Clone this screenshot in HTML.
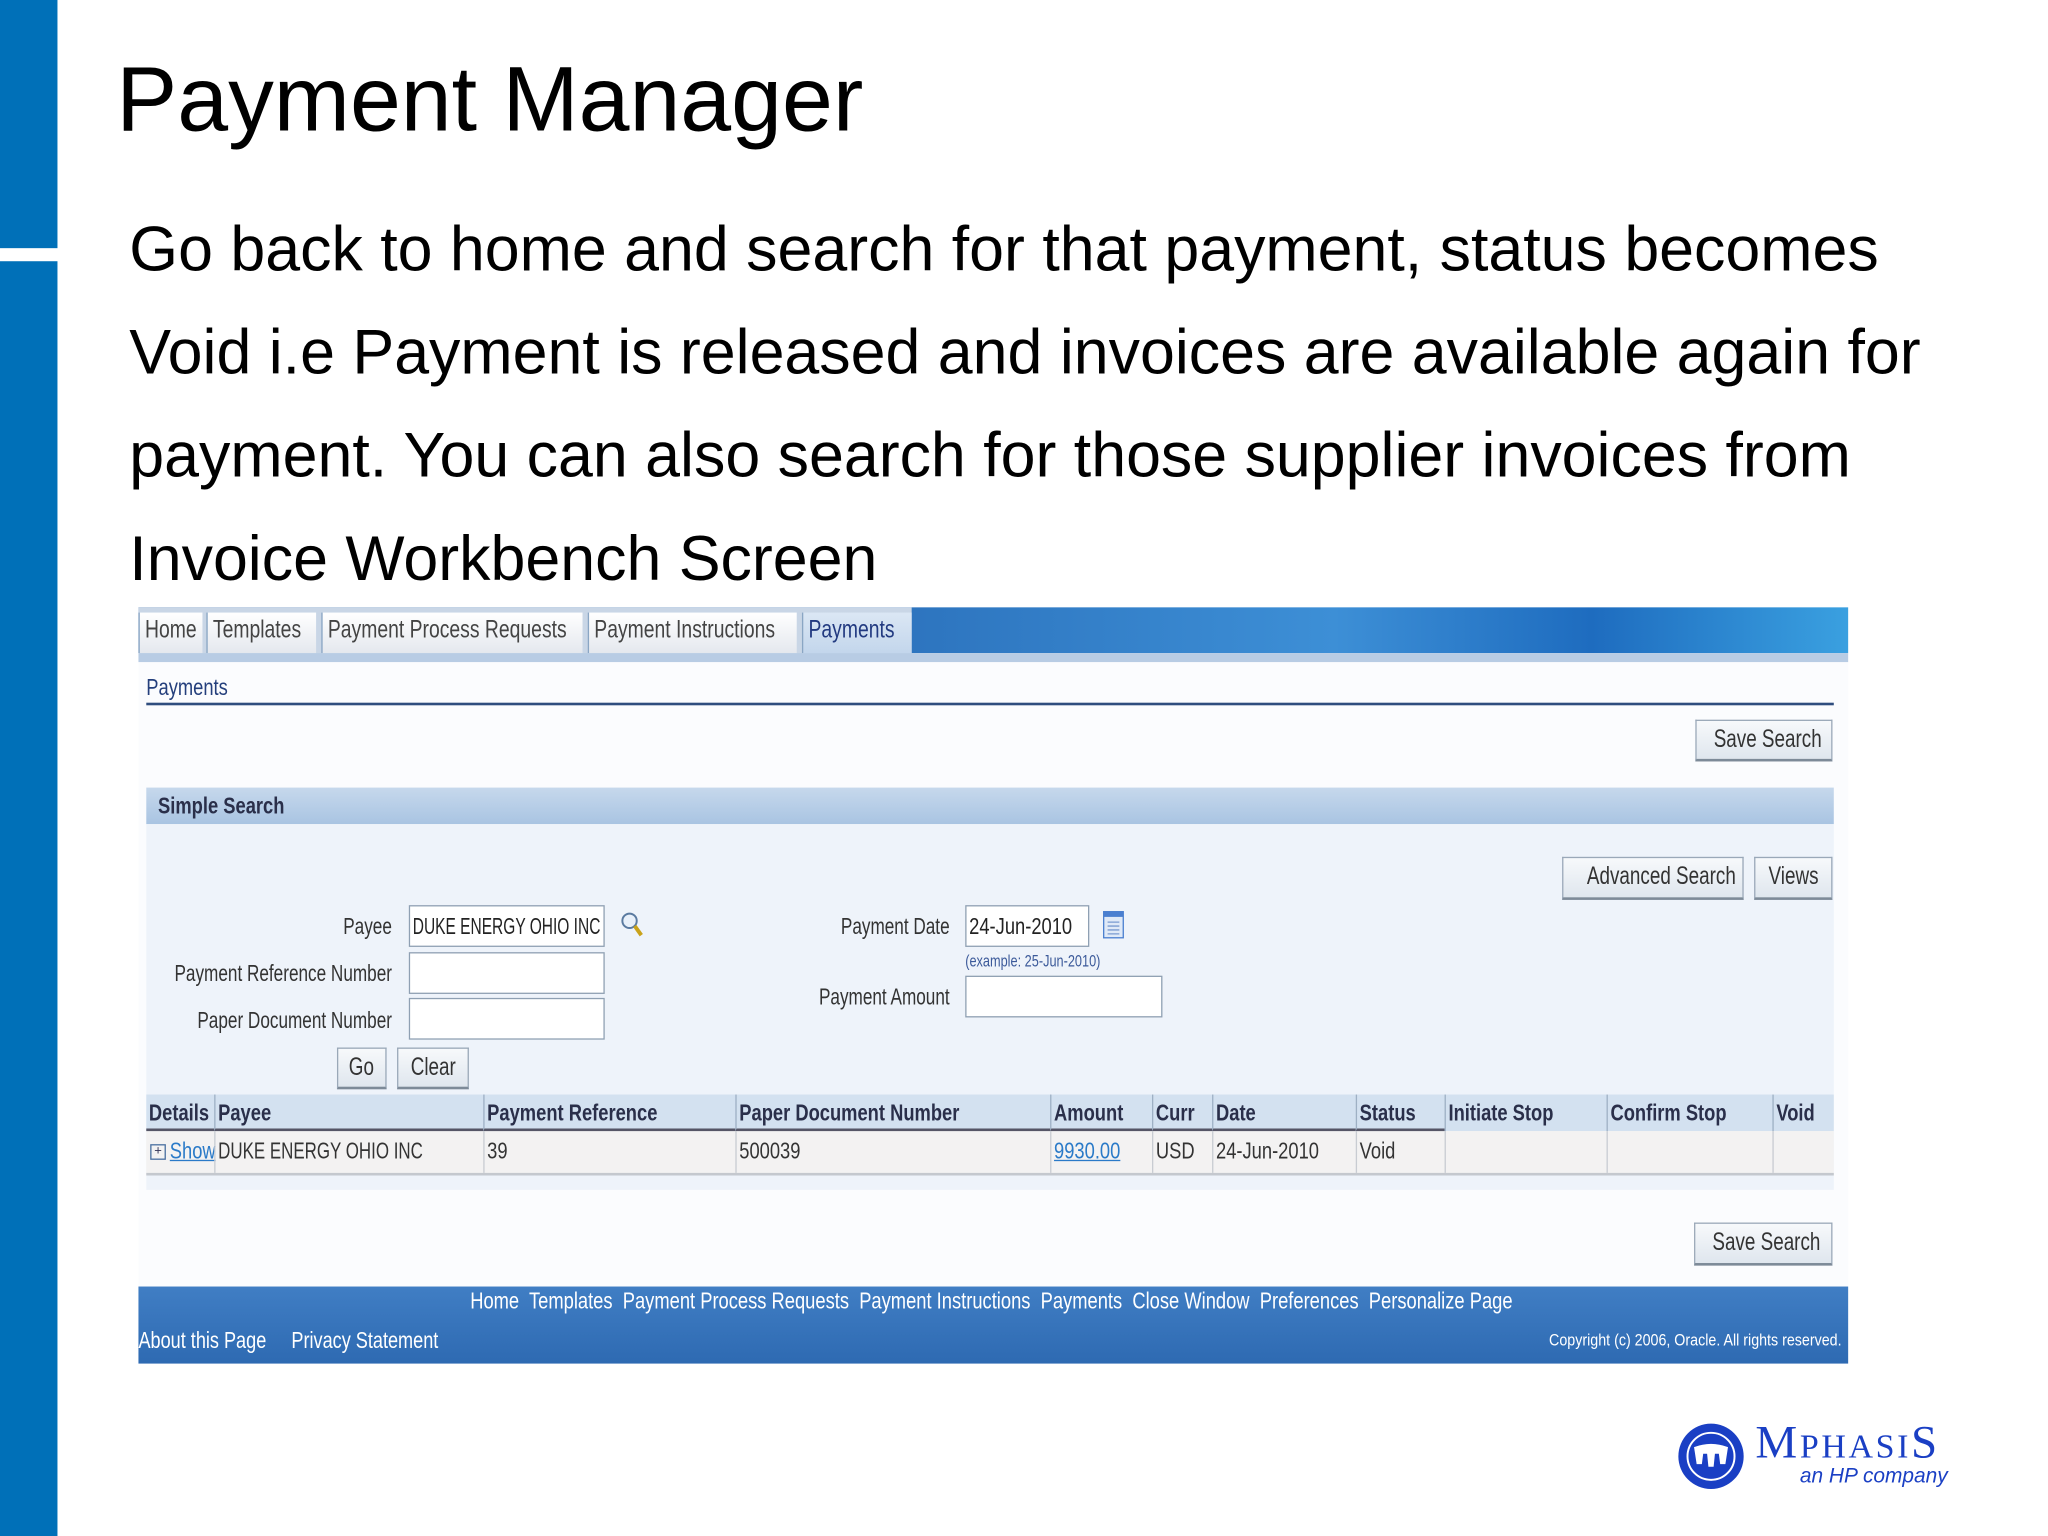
<!DOCTYPE html>
<html><head><meta charset="utf-8"><style>
html,body{margin:0;padding:0;background:#fff;}
body{width:2048px;height:1536px;overflow:hidden;position:relative;}
#s{position:absolute;left:0;top:0;width:1568px;height:1176px;transform:scale(1.30612);transform-origin:0 0;font-family:"Liberation Sans",sans-serif;}
.a{position:absolute;white-space:nowrap;}
.c{display:inline-block;transform:scaleX(.78);transform-origin:0 50%;white-space:nowrap;}
.cr{display:inline-block;transform:scaleX(.73);transform-origin:100% 50%;white-space:nowrap;}
.cc{display:inline-block;transform:scaleX(.76);transform-origin:50% 50%;white-space:nowrap;}
.u{font-size:18px;color:#333;}
.btn{position:absolute;border:1px solid #9aa8b8;border-bottom:2px solid #7d8a98;background:linear-gradient(#f7f9fb,#dfe6ee);font-size:19px;color:#333;text-align:center;box-sizing:border-box;white-space:nowrap;}
.inp{position:absolute;background:#fff;border:1px solid #8fa0b3;box-sizing:border-box;font-size:18px;color:#222;padding:5px 2px;white-space:nowrap;overflow:hidden;}
.lbl{position:absolute;text-align:right;font-size:18px;color:#333;white-space:nowrap;}
.tab{position:absolute;top:469px;height:31px;background:linear-gradient(#fff,#e4e8ee);border-left:1px solid #8aa6c4;box-sizing:border-box;font-size:19px;color:#444;padding:3px 4px;white-space:nowrap;}
.th{position:absolute;top:838px;height:28px;font-weight:bold;font-size:18px;color:#2a2f4a;padding:4px 2px;box-sizing:border-box;border-left:1px solid #9eb0c4;border-bottom:2px solid #556;white-space:nowrap;}
.td{position:absolute;top:866px;height:32px;font-size:18px;color:#333;padding:5px 2px;box-sizing:border-box;border-left:1px solid #c8ccd2;white-space:nowrap;}
.fl{position:absolute;font-size:19px;color:#fff;white-space:nowrap;}
</style></head><body><div id="s">
<div class="a" style="left:0;top:0;width:44px;height:190px;background:#0070b8;"></div>
<div class="a" style="left:0;top:200px;width:44px;height:976px;background:#0070b8;"></div>
<div class="a" style="left:89px;top:36px;font-size:70px;color:#000;">Payment Manager</div>
<div class="a" style="left:99px;top:164px;font-size:48px;color:#000;">Go back to home and search for that payment, status becomes</div>
<div class="a" style="left:99px;top:243px;font-size:48px;color:#000;">Void i.e Payment is released and invoices are available again for</div>
<div class="a" style="left:99px;top:322px;font-size:48px;color:#000;">payment. You can also search for those supplier invoices from</div>
<div class="a" style="left:99px;top:401px;font-size:48px;color:#000;">Invoice Workbench Screen</div>

<div class="a" style="left:106px;top:465px;width:1309px;height:35px;background:linear-gradient(90deg,#1f5fa8 0%,#2a6fba 40%,#3d8fd6 70%,#1e6cbf 85%,#3aa0e0 100%);"></div>
<div class="a" style="left:106px;top:465px;width:592px;height:35px;background:#c9d6e6;"></div>
<div class="a" style="left:106px;top:500px;width:1309px;height:7px;background:#b8cce4;"></div>
<div class="tab" style="left:106px;width:49px;"><span class="c">Home</span></div>
<div class="tab" style="left:158px;width:84px;"><span class="c">Templates</span></div>
<div class="tab" style="left:246px;width:200px;"><span class="c">Payment Process Requests</span></div>
<div class="tab" style="left:450px;width:160px;"><span class="c">Payment Instructions</span></div>
<div class="tab" style="left:614px;width:84px;background:linear-gradient(#dbe7f4,#c3d6ec);color:#223a80;"><span class="c">Payments</span></div>
<div class="a" style="left:106px;top:507px;width:1309px;height:478px;background:#fbfcfe;"></div>
<div class="a u" style="left:112px;top:516px;color:#243f7c;"><span class="c">Payments</span></div>
<div class="a" style="left:112px;top:538px;width:1292px;height:2px;background:#2f4d7e;"></div>
<div class="btn" style="left:1298px;top:551px;width:105px;height:32px;padding-top:4px;"><span class="cc">Save Search</span></div>
<div class="a" style="left:112px;top:603px;width:1292px;height:28px;background:linear-gradient(#c6d8ec,#a9c4e2);"></div>
<div class="a u" style="left:121px;top:607px;font-weight:bold;color:#2a2f4a;"><span class="c">Simple Search</span></div>
<div class="a" style="left:112px;top:631px;width:1292px;height:280px;background:#eef3fa;"></div>
<div class="btn" style="left:1196px;top:656px;width:139px;height:33px;padding-top:4px;"><span class="cc">Advanced Search</span></div>
<div class="btn" style="left:1343px;top:656px;width:60px;height:33px;padding-top:4px;"><span class="cc">Views</span></div>
<div class="lbl" style="right:1268px;top:699px;"><span class="cr">Payee</span></div>
<div class="lbl" style="right:1268px;top:735px;"><span class="cr">Payment Reference Number</span></div>
<div class="lbl" style="right:1268px;top:771px;"><span class="cr">Paper Document Number</span></div>
<div class="inp" style="left:313px;top:693px;width:150px;height:32px;"><span class="c" style="transform:scaleX(.66)">DUKE ENERGY OHIO INC</span></div>
<div class="inp" style="left:313px;top:729px;width:150px;height:32px;"></div>
<div class="inp" style="left:313px;top:764px;width:150px;height:32px;"></div>
<svg class="a" style="left:474px;top:697px;" width="20" height="22"><circle cx="8" cy="8" r="5.5" fill="#e8f0fa" stroke="#5a7aa0" stroke-width="1.5"/><path d="M12 12 L17 19" stroke="#c9a21a" stroke-width="3"/></svg>
<div class="lbl" style="right:841px;top:699px;"><span class="cr">Payment Date</span></div>
<div class="inp" style="left:739px;top:693px;width:95px;height:32px;"><span class="c">24-Jun-2010</span></div>
<svg class="a" style="left:844px;top:697px;" width="17" height="22"><rect x="1" y="1" width="15" height="20" fill="#dfe9f7" stroke="#4a7fd0"/><rect x="1" y="1" width="15" height="4" fill="#4a7fd0"/><path d="M4 9h9M4 12h9M4 15h9M4 18h9" stroke="#7a9ad0"/></svg>
<div class="a" style="left:739px;top:728px;font-size:13px;color:#3c5a9a;"><span class="c" style="transform:scaleX(.75)">(example: 25-Jun-2010)</span></div>
<div class="lbl" style="right:841px;top:753px;"><span class="cr">Payment Amount</span></div>
<div class="inp" style="left:739px;top:747px;width:151px;height:32px;"></div>
<div class="btn" style="left:258px;top:802px;width:38px;height:32px;padding-top:4px;"><span class="cc">Go</span></div>
<div class="btn" style="left:304px;top:802px;width:55px;height:32px;padding-top:4px;"><span class="cc">Clear</span></div>
<div class="a" style="left:112px;top:838px;width:1292px;height:28px;background:#d3e1f0;"></div>
<div class="a" style="left:112px;top:866px;width:1292px;height:32px;background:#f3f2f2;border-bottom:2px solid #c4c8ce;"></div>
<div class="th" style="left:112px;width:52px;border-left:none;"><span class="c">Details</span></div>
<div class="th" style="left:164px;width:206px;"><span class="c">Payee</span></div>
<div class="th" style="left:370px;width:193px;"><span class="c">Payment Reference</span></div>
<div class="th" style="left:563px;width:241px;"><span class="c">Paper Document Number</span></div>
<div class="th" style="left:804px;width:78px;"><span class="c">Amount</span></div>
<div class="th" style="left:882px;width:46px;"><span class="c">Curr</span></div>
<div class="th" style="left:928px;width:110px;"><span class="c">Date</span></div>
<div class="th" style="left:1038px;width:68px;"><span class="c">Status</span></div>
<div class="th" style="left:1106px;width:124px;border-bottom:none;"><span class="c">Initiate Stop</span></div>
<div class="th" style="left:1230px;width:127px;border-bottom:none;"><span class="c">Confirm Stop</span></div>
<div class="th" style="left:1357px;width:47px;border-bottom:none;"><span class="c">Void</span></div>
<div class="td" style="left:112px;width:52px;border-left:none;padding-left:3px;"><span style="display:inline-block;width:10px;height:10px;border:1px solid #4a6fa0;font-size:10px;line-height:10px;text-align:center;color:#335;vertical-align:middle;">+</span><span class="c" style="color:#2a7ac8;text-decoration:underline;margin-left:3px;">Show</span></div>
<div class="td" style="left:164px;width:206px;"><span class="c" style="transform:scaleX(.72)">DUKE ENERGY OHIO INC</span></div>
<div class="td" style="left:370px;width:193px;"><span class="c">39</span></div>
<div class="td" style="left:563px;width:241px;"><span class="c">500039</span></div>
<div class="td" style="left:804px;width:78px;color:#2a7ac8;"><span class="c" style="text-decoration:underline;">9930.00</span></div>
<div class="td" style="left:882px;width:46px;"><span class="c">USD</span></div>
<div class="td" style="left:928px;width:110px;"><span class="c">24-Jun-2010</span></div>
<div class="td" style="left:1038px;width:68px;"><span class="c">Void</span></div>
<div class="td" style="left:1106px;width:124px;"></div>
<div class="td" style="left:1230px;width:127px;"></div>
<div class="td" style="left:1357px;width:47px;"></div>
<div class="btn" style="left:1297px;top:936px;width:106px;height:33px;padding-top:4px;"><span class="cc">Save Search</span></div>
<div class="a" style="left:106px;top:985px;width:1309px;height:59px;background:linear-gradient(#407ec4,#2e6ab2);"></div>
<div class="fl" style="left:360px;top:986px;font-size:18px;"><span class="c" style="transform:scaleX(.78)">Home&nbsp; Templates&nbsp; Payment Process Requests&nbsp; Payment Instructions&nbsp; Payments&nbsp; Close Window&nbsp; Preferences&nbsp; Personalize Page</span></div>
<div class="fl" style="left:106px;top:1016px;font-size:18px;"><span class="c" style="transform:scaleX(.77)">About this Page&nbsp;&nbsp;&nbsp;&nbsp; Privacy Statement</span></div>
<div class="fl" style="left:1186px;top:1018px;font-size:13px;"><span class="c" style="transform:scaleX(.84)">Copyright (c) 2006, Oracle. All rights reserved.</span></div>

<svg class="a" style="left:1284px;top:1089px;" width="52" height="52"><circle cx="26" cy="26" r="25" fill="#1a3fc4"/><circle cx="26" cy="26" r="18" fill="none" stroke="#fff" stroke-width="1.5"/><path d="M13 19 Q26 14 39 19 L37 32 L33 32 L32 24 L29 24 L28 34 L24 34 L23 24 L20 24 L19 32 L15 32 Z" fill="#fff"/></svg>
<div class="a" style="left:1344px;top:1083px;font-family:'Liberation Serif',serif;color:#1a3fc4;font-size:36px;letter-spacing:2px;">M<span style="font-size:26px;">PHASI</span>S</div>
<div class="a" style="left:1378px;top:1122px;font-style:italic;color:#1a3fc4;font-size:16px;">an HP company</div>
</div></body></html>
